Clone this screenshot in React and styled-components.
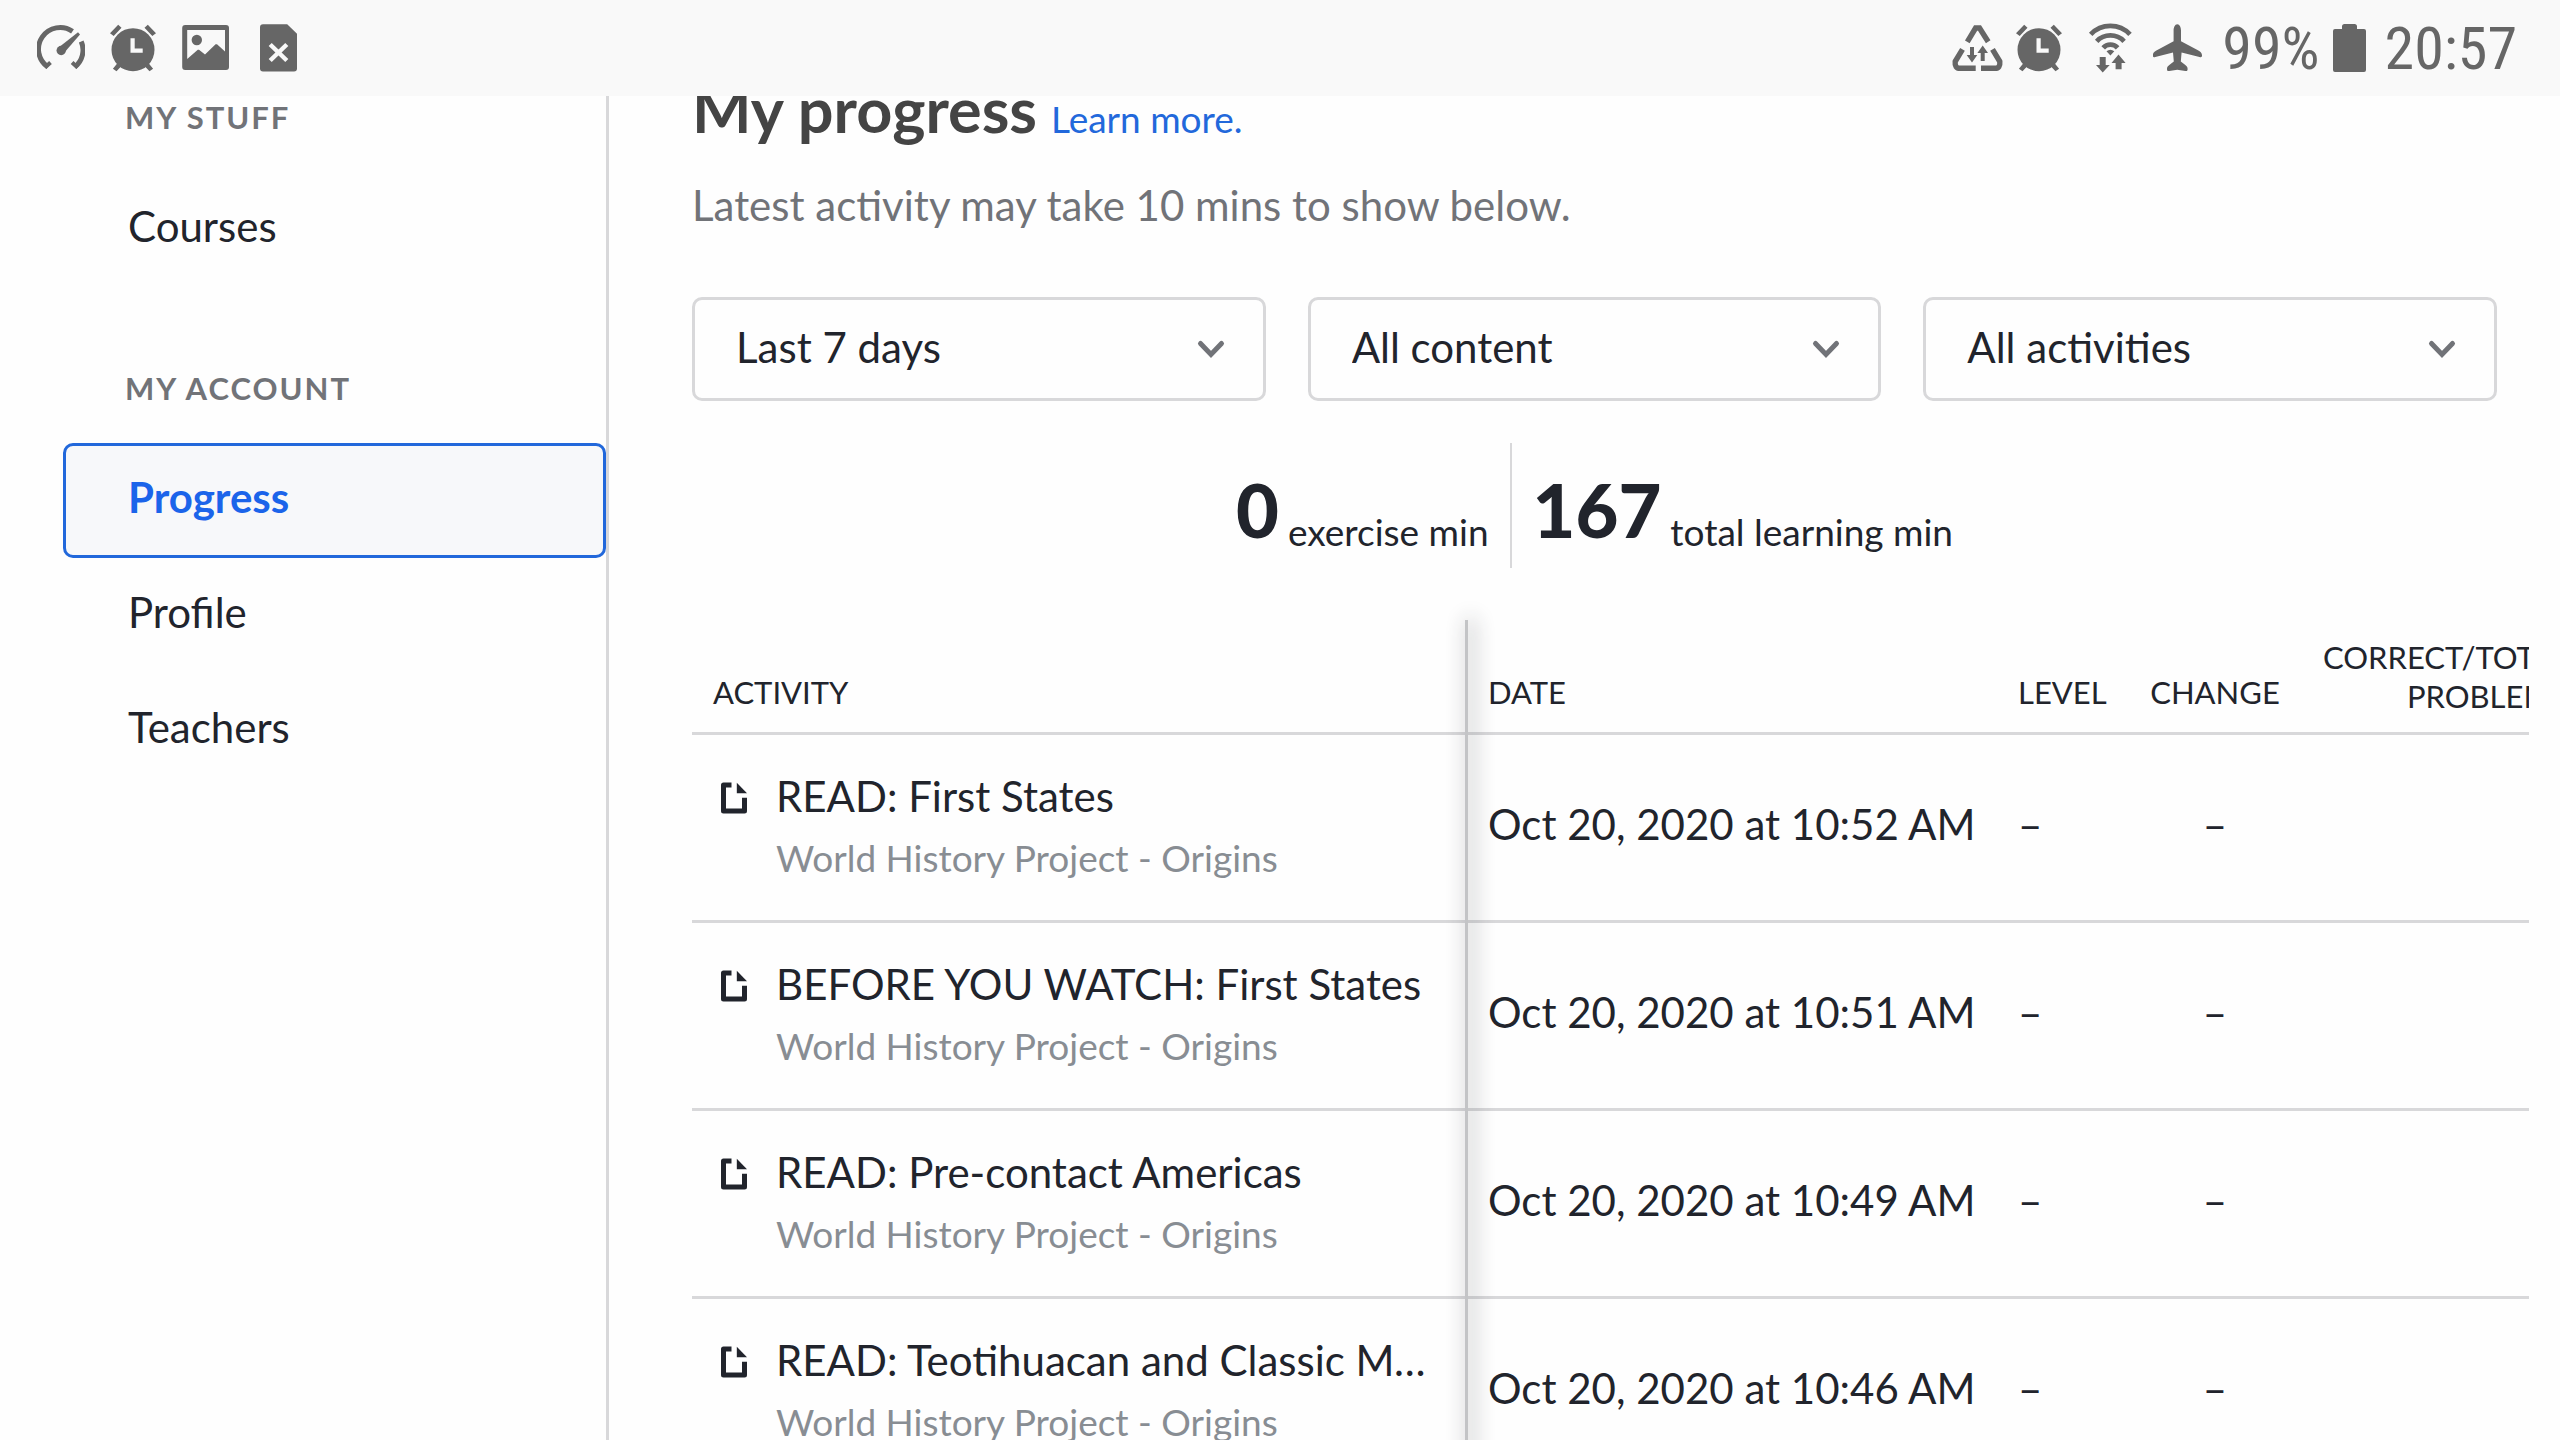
import React from "react";
import styled, { createGlobalStyle, css } from "styled-components";

const ink = "#21242c";
const muted = "#717378";
const line = "#d8d8da";
const activityWidth = 775;

const GlobalStyle = createGlobalStyle`
  * { box-sizing: border-box; }
  body {
    margin: 0;
    background: #fefefe;
    color: ${ink};
    font-family: Lato, "Open Sans", sans-serif;
    font-size: 42px;
  }
`;

const Screen = styled.div`
  height: 100vh;
  overflow: hidden;
  display: flex;
  flex-direction: column;
`;

const StatusBar = styled.header`
  position: relative;
  z-index: 2;
  flex: none;
  height: 96px;
  padding: 0 43px 0 37px;
  display: flex;
  align-items: center;
  justify-content: space-between;
  background: #f9f9f9;
  color: #666;
`;

const StatusGroup = styled.div`
  display: flex;
  align-items: center;
  gap: ${(p) => p.$gap}px;
`;

const StatusText = styled.span`
  padding-top: 2px;
  font-family: "Roboto Condensed", Roboto, sans-serif;
  font-size: 60px;
  line-height: 72px;
`;

const Body = styled.div`
  flex: 1;
  display: flex;
  margin-top: -40px;
`;

const Sidebar = styled.nav`
  flex: none;
  width: 609px;
  padding: 41px 0 0 63px;
  border-right: 3px solid ${line};
`;

const NavSection = styled.section`
  margin-bottom: 81px;
`;

const NavHeading = styled.h2`
  margin: 0 0 35px 62px;
  font-size: 31px;
  line-height: 40px;
  font-weight: 700;
  letter-spacing: 2px;
  text-transform: uppercase;
  color: ${muted};
`;

const NavList = styled.ul`
  margin: 0;
  padding: 0;
  list-style: none;
`;

const NavLink = styled.a`
  display: flex;
  align-items: center;
  height: 115px;
  padding: 0 62px 8px;
  border: 3px solid transparent;
  border-radius: 10px;
  color: ${ink};
  line-height: 52px;
  text-decoration: none;
  ${(p) =>
    p.$active &&
    css`
      border-color: #2268db;
      background: #f7f8fa;
      color: #1b64ea;
      font-weight: 700;
    `}
`;

const Main = styled.main`
  flex: 1;
  min-width: 0;
  padding: 15px 63px 0 83px;
`;

const TitleRow = styled.div`
  display: flex;
  align-items: baseline;
  gap: 14px;
`;

const Title = styled.h1`
  margin: 0;
  font-size: 63px;
  line-height: 76px;
  font-weight: 700;
  color: #444;
`;

const LearnMore = styled.a`
  font-size: 37px;
  line-height: 44px;
  color: #2268db;
  text-decoration: none;
`;

const Note = styled.p`
  margin: 32px 0 66px;
  line-height: 52px;
  color: ${muted};
`;

const Filters = styled.form`
  display: grid;
  grid-template-columns: repeat(3, 1fr);
  gap: 42px;
`;

const Filter = styled.div`
  position: relative;
`;

const Select = styled.select`
  appearance: none;
  display: block;
  width: 100%;
  height: 104px;
  padding: 0 84px 4px 41px;
  border: 3px solid ${line};
  border-radius: 10px;
  background: transparent;
  color: ${ink};
  font: inherit;
`;

const Chevron = styled.svg`
  position: absolute;
  top: 42px;
  right: 40px;
  pointer-events: none;
`;

const Stats = styled.div`
  display: flex;
  justify-content: center;
  margin: 42px 0 52px;
`;

const Stat = styled.div`
  display: flex;
  align-items: flex-end;
  gap: 9px;
  height: 125px;
  padding: 0 21px 14px;

  & + & {
    border-left: 2px solid ${line};
  }
`;

const StatNumber = styled.strong`
  font-size: 74px;
  line-height: 88px;
  font-weight: 900;
`;

const StatLabel = styled.span`
  font-size: 37px;
  line-height: 44px;
`;

const TableFrame = styled.div`
  position: relative;
  margin-right: -32px;
`;

const TableScroll = styled.div`
  overflow: hidden;
`;

const ColumnShadow = styled.div`
  position: absolute;
  top: 0;
  bottom: -400px;
  left: ${activityWidth - 2}px;
  width: 3px;
  background: #c3c4c6;
  box-shadow: 4px 0 20px 2px rgba(33, 36, 44, 0.32);
`;

const Table = styled.table`
  table-layout: fixed;
  width: 1898px;
  border-collapse: separate;
  border-spacing: 0;
`;

const Col = styled.col`
  width: ${(p) => p.$width}px;
`;

const HeadCell = styled.th`
  padding: 18px 21px 16px;
  border-bottom: 3px solid ${line};
  font-size: 31px;
  line-height: ${(p) => (p.$stacked ? 39 : 47)}px;
  font-weight: 400;
  text-align: ${(p) => p.$align || "left"};
  text-transform: uppercase;
  vertical-align: bottom;
`;

const Cell = styled.td`
  padding: 0 21px 8px;
  border-bottom: 3px solid ${line};
  line-height: 52px;
  text-align: ${(p) => p.$align || "left"};
  white-space: nowrap;
`;

const ActivityCell = styled.td`
  padding: 30px 40px 31px 26px;
  border-bottom: 3px solid ${line};
  line-height: 62px;
`;

const Activity = styled.div`
  display: grid;
  grid-template-columns: 32px 1fr;
  column-gap: 26px;

  svg {
    margin-top: 17px;
  }
`;

const ActivityTitle = styled.div`
  overflow: hidden;
  text-overflow: ellipsis;
  white-space: nowrap;
`;

const ActivityCourse = styled.div`
  grid-column: 2;
  font-size: 37px;
  color: #888d93;
`;

const GaugeIcon = () => (
  <svg width="48" height="50" viewBox="0 -1 48 50" fill="none" stroke="currentColor" strokeWidth="5">
    <path d="M10.8 43A21.5 21.5 0 0 1 35.5 7.4M44.2 17.5A21.5 21.5 0 0 1 37.8 43" />
    <path d="M8 43.5l5.5-5M40.6 43.5l-5.5-5" strokeWidth="4" />
    <path d="M41 8.3L21 24l6 5L43 10.5z" fill="currentColor" stroke="none" />
    <circle cx="24.2" cy="26.5" r="4.7" fill="currentColor" stroke="none" />
  </svg>
);

const AlarmIcon = () => (
  <svg width="48" height="50" viewBox="0 -1 48 50" fill="currentColor">
    <circle cx="24" cy="25.7" r="21.5" />
    <path d="M1 9.3L9.2.8l3.3 3L4.7 12zM47 9.3L38.8.8l-3.3 3 7.8 8.2zM3.9 44.7l3.6 2.6 5-5.3-3.5-3.4zM44.1 44.7l-3.6 2.6-5-5.3 3.5-3.4z" />
    <path d="M23.6 14.3v12.4h10.1" fill="none" stroke="#f9f9f9" strokeWidth="4.2" />
  </svg>
);

const ImageIcon = () => (
  <svg width="48" height="50" viewBox="0 -1 48 50">
    <rect x="1.2" y="1" width="46.8" height="45" rx="3" fill="currentColor" />
    <path d="M6.2 6H44v21.5l-8-7.2h-1.4L24 30.4l-6-4.6h-1.2L6.2 35z" fill="#f9f9f9" />
    <circle cx="15.8" cy="16" r="5.2" fill="currentColor" />
  </svg>
);

const FileErrorIcon = () => (
  <svg width="48" height="50" viewBox="0 -1 48 50">
    <path d="M10 .3h24.2L44 9.8v34.7a3 3 0 0 1-3 3H10a3 3 0 0 1-3-3V3.300a3 3 0 0 1 3-3z" fill="currentColor" />
    <path d="M17.200 20.500l16.600 16M33.800 20.500l-16.600 16" stroke="#f9f9f9" strokeWidth="4.400" />
  </svg>
);

const DataSaverIcon = () => (
  <svg width="52" height="50" viewBox="0 -1 52 50" fill="none" stroke="currentColor" strokeWidth="5.400">
    <path d="M16.300 17.800L24.600 4h3.900l8.700 13.800" />
    <path d="M11.500 25.300L4.200 37.500Q3.500 44.300 9 44.300h15.700" strokeLinejoin="round" />
    <path d="M41.500 25.300l7.300 12.200q.7 6.800-4.800 6.800H30" strokeLinejoin="round" />
    <path
      d="M19 23h4v8h3.300L21 38.500 15.700 31H19zM29.700 37h4v-8H37l-5.300-7.500-5.300 7.500h3.300z"
      fill="currentColor"
      stroke="none"
    />
  </svg>
);

const WifiIcon = () => (
  <svg width="66" height="50" viewBox="0 -1 66 50" fill="none" stroke="currentColor" strokeWidth="4.800">
    <path d="M15.700 10.300A27 27 0 0 1 55 10.300M21.700 17.300a19 19 0 0 1 27.400 0M28.200 23.800a9.600 9.600 0 0 1 14.400 0" />
    <path
      d="M31.500 27.300q3.900-3 7.800 0L35.400 31.500zM24.700 33h6v8h4l-7 7.500-6.700-7.500h3.700zM40.600 45.300h6V39h4L43.500 30.500 36.500 39h4.100z"
      fill="currentColor"
      stroke="none"
    />
  </svg>
);

const PlaneIcon = () => (
  <svg width="50" height="50" viewBox="0 -1 50 50" fill="currentColor">
    <path d="M24.300.3c2.400 0 3.700 3.200 3.700 6.500v10.500l16 8.500c3.500 1.900 5 3.200 5 5.500 0 2-.8 2.200-2.500 1.700L28.600 28.500l-.8 9 4.500 3.500c1.700 1.300 2.300 2.300 2.300 4 0 1.900-.6 2.200-2.300 1.900l-8-1.200-8 1.200c-1.700.3-2.300 0-2.300-1.900 0-1.700.6-2.700 2.300-4l4.500-3.500-.8-9L2.300 33C.6 33.500-.2 33.300-.2 31.300c0-2.300 1.500-3.600 5-5.500l15.800-8.500V6.800c0-3.300 1.300-6.500 3.700-6.500z" />
  </svg>
);

const BatteryIcon = () => (
  <svg width="33" height="50" viewBox="0 -1 33 50" fill="currentColor">
    <path d="M11.500 0h10q2.500 0 2.500 2.500V5h7q2 0 2 2v39q0 2-2 2H2q-2 0-2-2V7q0-2 2-2h7V2.500Q9 0 11.500 0z" />
  </svg>
);

const ArticleIcon = () => (
  <svg width="32" height="32" viewBox="0 0 32 32" fill="none" aria-hidden="true">
    <path d="M13.500 3H5.500v26h21V15.800" stroke={ink} strokeWidth="5" strokeLinejoin="round" />
    <path d="M18.800.8L29 11.200H18.800z" fill={ink} />
  </svg>
);

const navigation = [
  { heading: "My stuff", items: ["Courses"] },
  { heading: "My account", items: ["Progress", "Profile", "Teachers"] },
];

const filters = ["Last 7 days", "All content", "All activities"];

const activities = [
  { title: "READ: First States", date: "Oct 20, 2020 at 10:52 AM" },
  { title: "BEFORE YOU WATCH: First States", date: "Oct 20, 2020 at 10:51 AM" },
  { title: "READ: Pre-contact Americas", date: "Oct 20, 2020 at 10:49 AM" },
  { title: "READ: Teotihuacan and Classic Mesoamerica", date: "Oct 20, 2020 at 10:46 AM" },
];

export default function App() {
  return (
    <Screen>
      <GlobalStyle />
      <StatusBar>
        <StatusGroup $gap={24}>
          <GaugeIcon />
          <AlarmIcon />
          <ImageIcon />
          <FileErrorIcon />
        </StatusGroup>
        <StatusGroup $gap={19}>
          <StatusGroup $gap={12}>
            <DataSaverIcon />
            <AlarmIcon />
            <WifiIcon />
            <PlaneIcon />
          </StatusGroup>
          <StatusGroup $gap={13}>
            <StatusText>99%</StatusText>
            <BatteryIcon />
          </StatusGroup>
          <StatusText>20:57</StatusText>
        </StatusGroup>
      </StatusBar>
      <Body>
        <Sidebar>
          {navigation.map((section) => (
            <NavSection key={section.heading}>
              <NavHeading>{section.heading}</NavHeading>
              <NavList>
                {section.items.map((item) => (
                  <li key={item}>
                    <NavLink href={`#${item.toLowerCase()}`} $active={item === "Progress"}>
                      {item}
                    </NavLink>
                  </li>
                ))}
              </NavList>
            </NavSection>
          ))}
        </Sidebar>
        <Main>
          <TitleRow>
            <Title>My progress</Title>
            <LearnMore href="#learn-more">Learn more.</LearnMore>
          </TitleRow>
          <Note>Latest activity may take 10 mins to show below.</Note>
          <Filters>
            {filters.map((name) => (
              <Filter key={name}>
                <Select aria-label={name}>
                  <option>{name}</option>
                </Select>
                <Chevron width="30" height="22" viewBox="0 0 30 22" fill="none" aria-hidden="true">
                  <path d="M4.500 4.500L15 15.500 25.500 4.500" stroke={muted} strokeWidth="5" strokeLinecap="round" />
                </Chevron>
              </Filter>
            ))}
          </Filters>
          <Stats>
            <Stat>
              <StatNumber>0</StatNumber>
              <StatLabel>exercise min</StatLabel>
            </Stat>
            <Stat>
              <StatNumber>167</StatNumber>
              <StatLabel>total learning min</StatLabel>
            </Stat>
          </Stats>
          <TableFrame>
            <TableScroll>
              <Table>
                <colgroup>
                  <Col $width={activityWidth} />
                  <Col $width={530} />
                  <Col $width={131} />
                  <Col $width={174} />
                  <Col />
                </colgroup>
                <thead>
                  <tr>
                    <HeadCell>Activity</HeadCell>
                    <HeadCell>Date</HeadCell>
                    <HeadCell>Level</HeadCell>
                    <HeadCell $align="center">Change</HeadCell>
                    <HeadCell $align="right" $stacked>
                      Correct/Total problems
                    </HeadCell>
                  </tr>
                </thead>
                <tbody>
                  {activities.map((activity) => (
                    <tr key={activity.date}>
                      <ActivityCell>
                        <Activity>
                          <ArticleIcon />
                          <ActivityTitle>{activity.title}</ActivityTitle>
                          <ActivityCourse>World History Project - Origins</ActivityCourse>
                        </Activity>
                      </ActivityCell>
                      <Cell>{activity.date}</Cell>
                      <Cell>–</Cell>
                      <Cell $align="center">–</Cell>
                      <Cell />
                    </tr>
                  ))}
                </tbody>
              </Table>
            </TableScroll>
            <ColumnShadow />
          </TableFrame>
        </Main>
      </Body>
    </Screen>
  );
}
